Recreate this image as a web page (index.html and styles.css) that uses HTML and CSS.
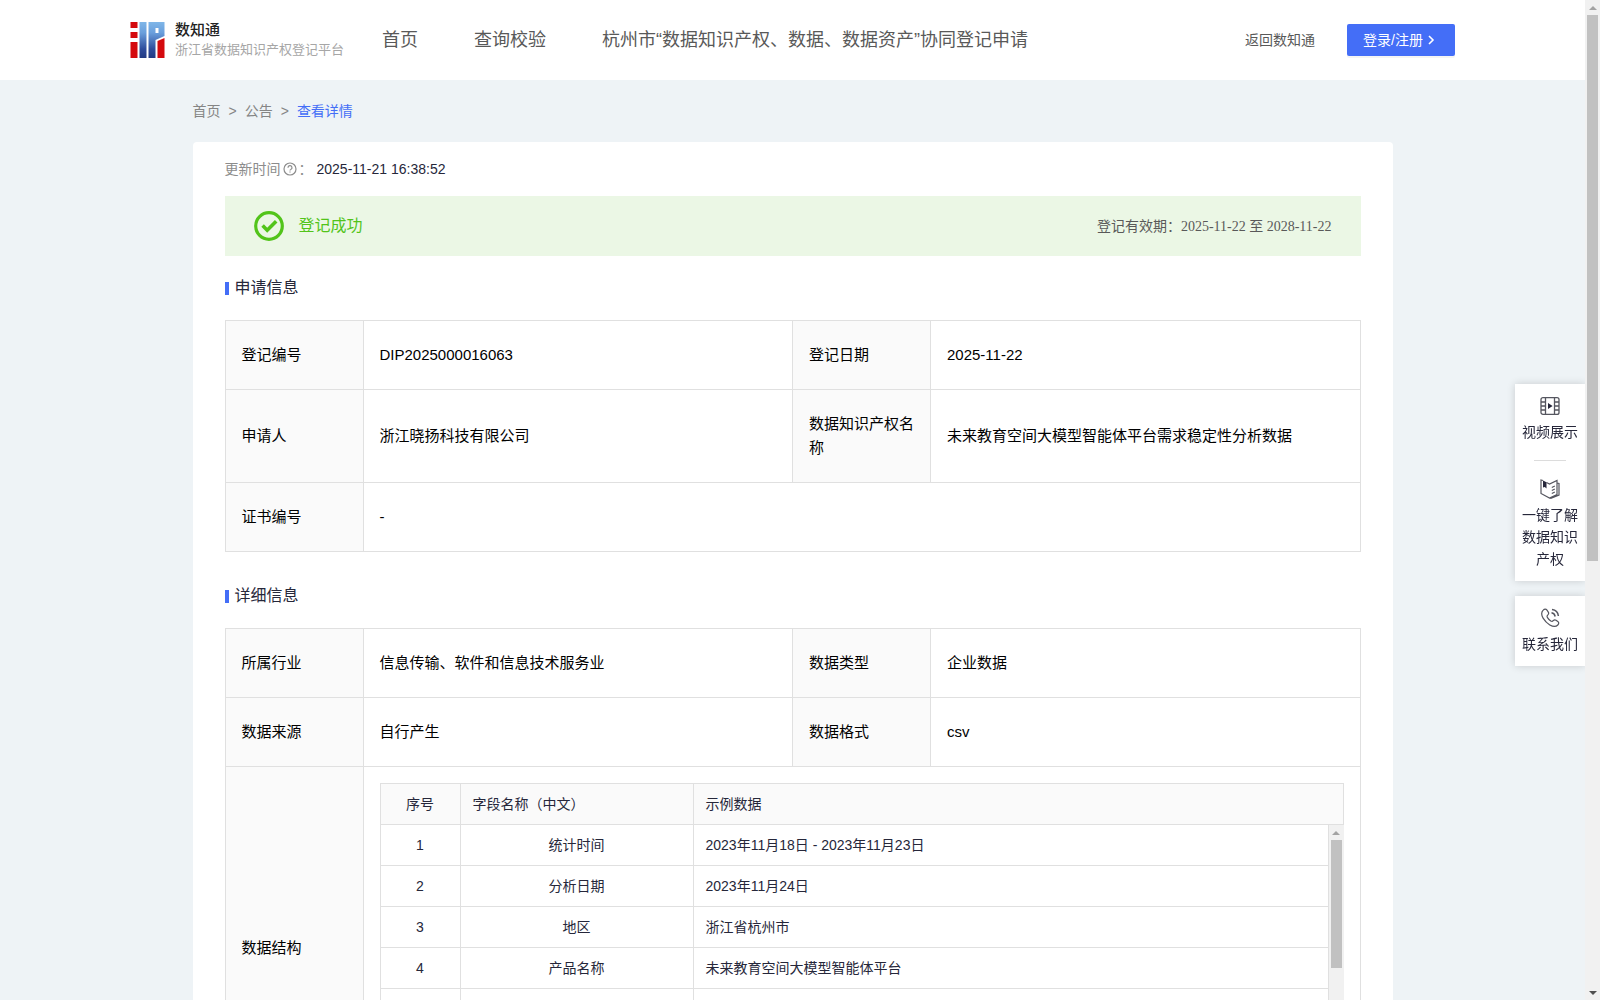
FILE: index.html
```html
<!DOCTYPE html>
<html lang="zh-CN">
<head>
<meta charset="utf-8">
<meta name="viewport" content="width=device-width, initial-scale=1">
<title>数知通 - 查看详情</title>
<link rel="stylesheet" href="styles.css">
</head>
<body>
<div class="shell">
  <div class="page">
    <header class="header">
      <a class="brand" href="#">
        <svg class="brand-logo" viewBox="0 0 34 36" aria-hidden="true">
          <defs>
            <linearGradient id="blue" x1="0" y1="0" x2="0" y2="36" gradientUnits="userSpaceOnUse">
              <stop offset="0" stop-color="#7fb6e8"/>
              <stop offset=".3" stop-color="#6a9fdc"/>
              <stop offset=".75" stop-color="#2e4c9c"/>
              <stop offset="1" stop-color="#223a82"/>
            </linearGradient>
          </defs>
          <path fill="#d40a0e" d="M0 0h7v6H0zM0 10h7v6H0zM0 20h7v16H0zM27 19l7-3v20h-7z"/>
          <path fill="url(#blue)" d="M9 0h7v36H9zM18 0h16v14l-9 4v18h-7zM25 6v5h3V6z" fill-rule="evenodd"/>
        </svg>
        <span class="brand-text">
          <strong class="brand-name">数知通</strong>
          <span class="brand-sub">浙江省数据知识产权登记平台</span>
        </span>
      </a>
      <nav class="nav">
        <a href="#">首页</a>
        <a href="#">查询校验</a>
        <a href="#">杭州市“数据知识产权、数据、数据资产”协同登记申请</a>
      </nav>
      <div class="actions">
        <a class="back" href="#">返回数知通</a>
        <button class="login" type="button">登录/注册
          <svg class="login-arrow" viewBox="0 0 12 12" aria-hidden="true"><path d="M4 2l4 4-4 4" fill="none" stroke="currentColor" stroke-width="1.6"/></svg>
        </button>
      </div>
    </header>

    <main class="content">
      <nav class="crumbs">
        <a href="#">首页</a><span>&gt;</span><a href="#">公告</a><span>&gt;</span><a class="current" href="#">查看详情</a>
      </nav>

      <section class="card">
        <div class="updated">
          <span class="updated-label">更新时间</span>
          <svg class="help" viewBox="0 0 14 14" aria-hidden="true"><circle cx="7" cy="7" r="6" fill="none" stroke="currentColor" stroke-width="1.2"/><path d="M5 5.7a2 2 0 1 1 2.8 1.8c-.5.2-.8.5-.8 1.1" fill="none" stroke="currentColor" stroke-width="1.2"/><path d="M6.4 9.4h1.2v1.2H6.4z" fill="currentColor"/></svg>
          <span class="updated-label">：</span>
          <time class="updated-time">2025-11-21 16:38:52</time>
        </div>

        <div class="banner">
          <svg class="banner-icon" viewBox="0 0 30 30" aria-hidden="true"><circle cx="15" cy="15" r="13.3" fill="none" stroke="#52c41a" stroke-width="3.2"/><path d="M8.6 14.6l4.6 4.6 9-9" fill="none" stroke="#52c41a" stroke-width="3.6"/></svg>
          <span class="banner-state">登记成功</span>
          <span class="banner-period">登记有效期：<span class="banner-dates">2025-11-22 至 2028-11-22</span></span>
        </div>

        <h2 class="title">申请信息</h2>
        <table class="info">
          <colgroup><col class="col-label"><col><col class="col-label"><col></colgroup>
          <tbody>
            <tr><th scope="row">登记编号</th><td>DIP2025000016063</td><th scope="row">登记日期</th><td>2025-11-22</td></tr>
            <tr><th scope="row">申请人</th><td>浙江晓扬科技有限公司</td><th scope="row">数据知识产权名称</th><td>未来教育空间大模型智能体平台需求稳定性分析数据</td></tr>
            <tr><th scope="row">证书编号</th><td colspan="3">-</td></tr>
          </tbody>
        </table>

        <h2 class="title">详细信息</h2>
        <table class="info">
          <colgroup><col class="col-label"><col><col class="col-label"><col></colgroup>
          <tbody>
            <tr><th scope="row">所属行业</th><td>信息传输、软件和信息技术服务业</td><th scope="row">数据类型</th><td>企业数据</td></tr>
            <tr><th scope="row">数据来源</th><td>自行产生</td><th scope="row">数据格式</th><td>csv</td></tr>
            <tr>
              <th scope="row">数据结构</th>
              <td class="nest" colspan="3">
                <table class="fields fields-head">
                  <colgroup><col class="col-no"><col class="col-name"><col></colgroup>
                  <thead><tr><th class="mid" scope="col">序号</th><th scope="col">字段名称（中文）</th><th scope="col">示例数据</th></tr></thead>
                </table>
                <div class="fields-body">
                  <div class="fields-view">
                    <table class="fields">
                      <colgroup><col class="col-no"><col class="col-name"><col></colgroup>
                      <tbody>
                        <tr><td class="mid">1</td><td class="mid">统计时间</td><td>2023年11月18日 - 2023年11月23日</td></tr>
                        <tr><td class="mid">2</td><td class="mid">分析日期</td><td>2023年11月24日</td></tr>
                        <tr><td class="mid">3</td><td class="mid">地区</td><td>浙江省杭州市</td></tr>
                        <tr><td class="mid">4</td><td class="mid">产品名称</td><td>未来教育空间大模型智能体平台</td></tr>
                        <tr><td class="mid"></td><td class="mid"></td><td></td></tr>
                      </tbody>
                    </table>
                  </div>
                  <div class="bar" aria-hidden="true"><span class="bar-up"></span><span class="bar-thumb bar-thumb-half"></span><span class="bar-down"></span></div>
                </div>
              </td>
            </tr>
          </tbody>
        </table>
      </section>
    </main>
  </div>

  <div class="bar" aria-hidden="true"><span class="bar-up"></span><span class="bar-thumb bar-thumb-page"></span><span class="bar-down"></span></div>

  <aside class="side">
    <div class="side-box">
      <a class="side-item" href="#">
        <svg viewBox="0 0 20 20" aria-hidden="true" fill="none" stroke="#55565f" stroke-width="1.3"><rect x="1" y="1.6" width="18" height="16.8" rx="2"/><path d="M5.5 2v16M14.5 2v16M1 6h4.500M1 10h4.500M1 14h4.500M14.500 6H19M14.500 10H19M14.500 14H19"/><path d="M8 7l4.600 3L8 13z" fill="#26273a" stroke="none"/></svg>
        <span>视频展示</span>
      </a>
      <hr class="side-line">
      <a class="side-item" href="#">
        <svg viewBox="0 0 20 20" aria-hidden="true" fill="none" stroke="#55565f" stroke-width="1.2"><path d="M3 1.500L1 1v13.500l8.500 4.500 7.500-3.500V1.500L9.500 5 6.500 3.500M17 4l2 .5V16l-8.500 3.500M11.800 8.500l3-1.500M11.800 11.500l3-1.500M11.800 14.500l3-1.500"/><path d="M3 1.500l3.500 1.700V9.500L4.800 8 3 8.600z" fill="#26273a" stroke="none"/></svg>
        <span>一键了解数据知识产权</span>
      </a>
    </div>
    <div class="side-box">
      <a class="side-item" href="#">
        <svg viewBox="0 0 20 20" aria-hidden="true" fill="none" stroke="#55565f" stroke-width="1.200"><path d="M3.200 2.200C4.500.8 6 .8 7 2.200l1.300 2c.8 1.200.4 2-.6 2.900-.9.800-.9 1.400-.2 2.500.9 1.400 2 2.500 3.300 3.400 1 .6 1.700.6 2.400-.3.900-1 1.700-1.200 2.800-.5l1.800 1.300c1.300.9 1.200 2.200 0 3.500-1.800 1.900-4.700 1.900-8-.1-2.800-1.700-5-4-6.700-6.800-2-3.400-1.800-6 .1-7.900z"/><path d="M11.500 4.800c2 .3 3.300 1.600 3.700 3.700M12 1.500c3.500.4 6 2.800 6.400 6.500" stroke-width="1.500"/></svg>
        <span>联系我们</span>
      </a>
    </div>
  </aside>
</div>
</body>
</html>
```
FILE: styles.css
```css
* { box-sizing: border-box; }

body {
  margin: 0;
  font: 14px/22px "Liberation Sans", "Noto Sans CJK SC", sans-serif;
  color: #26273a;
  background: #eef3f6;
}

a { color: inherit; text-decoration: none; }

.shell {
  display: grid;
  grid-template-columns: minmax(0, 1fr) 15px;
  height: 100vh;
}

.page {
  overflow-y: auto;
  scrollbar-width: none;
}

/* Header */
.header {
  display: flex;
  align-items: center;
  height: 80px;
  padding: 0 130px;
  background: #fff;
}

.brand { display: flex; align-items: center; gap: 10px; }
.brand-logo { width: 35px; height: 36px; }
.brand-text { display: flex; flex-direction: column; }
.brand-name { font-size: 15px; line-height: 20px; font-weight: 500; color: #222; }
.brand-sub { font-size: 13px; line-height: 20px; color: #a6a6a6; }

.nav {
  display: flex;
  gap: 56px;
  margin-left: 38px;
  font-size: 18px;
  color: #595959;
}

.actions { display: flex; align-items: center; gap: 32px; margin-left: auto; color: #595959; }

.login {
  display: flex;
  align-items: center;
  gap: 2px;
  width: 108px;
  height: 32px;
  padding: 0 16px;
  border: 0;
  border-radius: 2px;
  font: inherit;
  color: #fff;
  white-space: nowrap;
  background: #446ef7;
  box-shadow: 0 2px 0 rgba(0, 0, 0, .045);
}
.login-arrow { width: 12px; height: 12px; flex: none; }

/* Content */
.content { max-width: 1200px; margin: 0 auto; padding-bottom: 40px; }

.crumbs { display: flex; gap: 8px; padding: 20px 0; color: #858585; }
.crumbs .current { color: #446ef7; }

.card {
  padding: 16px 32px 32px;
  border-radius: 4px;
  background: #fff;
}

.updated { display: flex; align-items: center; gap: 2px; color: #8c8c8c; }
.help { width: 14px; height: 14px; }
.updated-time { margin-left: 2px; color: #26273a; }

.banner {
  display: flex;
  align-items: center;
  gap: 15px;
  height: 60px;
  margin-top: 16px;
  padding: 0 29px;
  background: #ebf7e5;
}
.banner-icon { width: 30px; height: 30px; }
.banner-state { font-size: 16px; color: #52c41a; }
.banner-period { margin-left: auto; color: #595959; }
.banner-dates { font-family: "Liberation Serif", "Noto Sans CJK SC", serif; }

.title {
  display: flex;
  align-items: center;
  gap: 6px;
  margin: 20px 0;
  font-size: 16px;
  line-height: 24px;
  font-weight: 400;
}
.title::before { content: ""; width: 4px; height: 13px; background: #446ef7; }
.info + .title { margin-top: 32px; }

.info {
  width: 100%;
  table-layout: fixed;
  border-collapse: collapse;
  font-size: 15px;
  line-height: 24px;
  color: #000;
}
.info th, .info td {
  padding: 22px 16px;
  border: 1px solid #e0e0e0;
  font-weight: 400;
  text-align: left;
}
.info th { background: #fafafa; }
.col-label { width: 138px; }
.info .nest { padding: 16px; }

/* Field list inside the detail table */
.fields {
  width: 100%;
  table-layout: fixed;
  border-collapse: separate;
  border-spacing: 0;
  border-left: 1px solid #e0e0e0;
  font-size: 14px;
  line-height: 24px;
  color: #26273a;
}
.info .fields th, .info .fields td {
  height: 41px;
  padding: 8px 12px;
  border: 0 solid #e0e0e0;
  border-width: 0 1px 1px 0;
}
.fields-head { border-top: 1px solid #e0e0e0; }
.info .fields .mid { text-align: center; }
.col-no { width: 80px; }
.col-name { width: 233px; }

.fields-body {
  display: grid;
  grid-template-columns: minmax(0, 1fr) 15px;
  height: 287px;
}
.fields-view { overflow-y: auto; scrollbar-width: none; }

/* Scroll bars */
.bar {
  display: flex;
  flex-direction: column;
  align-items: center;
  background: #f1f1f1;
}
.bar-up, .bar-down { display: grid; place-items: center; width: 15px; height: 15px; }
.bar-up::before, .bar-down::before { content: ""; border: 4px solid transparent; }
.bar-up::before { border-top: 0; border-bottom-color: #a3a3a3; }
.bar-down::before { border-bottom: 0; border-top-color: #505050; }
.bar-down { margin-top: auto; }
.bar-thumb { width: 11px; background: #c1c1c1; }
.bar-thumb-page { height: 546px; }
.bar-thumb-half { height: 128px; }

/* Floating shortcuts */
.side {
  position: fixed;
  top: 384px;
  right: 15px;
  display: grid;
  gap: 15px;
  width: 70px;
}
.side-box {
  padding: 12px 6px 11px;
  background: #fff;
  box-shadow: 0 0 8px rgba(0, 0, 0, .16);
  clip-path: inset(-10px 0 -10px -10px);
}
.side-item { display: flex; flex-direction: column; align-items: center; gap: 5px; text-align: center; }
.side-item svg { width: 20px; height: 20px; }
.side-line { width: 32px; margin: 17px auto 18px; border: 0; border-top: 1px solid #dcdcdc; }
```
